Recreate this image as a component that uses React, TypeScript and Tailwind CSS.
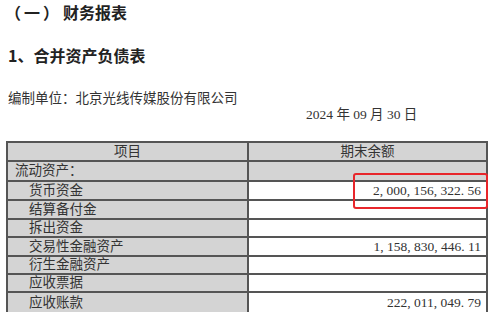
const rows: { label: string; indent: boolean; value: string; h: string; grayValue?: boolean }[] = [
  { label: "流动资产：", indent: false, value: "", h: "h-[20px]", grayValue: true },
  { label: "货币资金", indent: true, value: "2, 000, 156, 322. 56", h: "h-[19px]" },
  { label: "结算备付金", indent: true, value: "", h: "h-[19px]" },
  { label: "拆出资金", indent: true, value: "", h: "h-[18px]" },
  { label: "交易性金融资产", indent: true, value: "1, 158, 830, 446. 11", h: "h-[19px]" },
  { label: "衍生金融资产", indent: true, value: "", h: "h-[18px]" },
  { label: "应收票据", indent: true, value: "", h: "h-[18px]" },
  { label: "应收账款", indent: true, value: "222, 011, 049. 79", h: "h-[19px]" },
];

const serif = "font-['Liberation_Serif','Noto_Sans_CJK_SC',serif]";

export default function App() {
  return (
    <div className="w-[491px] h-[312px] bg-white overflow-hidden relative font-['Noto_Sans_CJK_SC',sans-serif] text-[#222]">
      {/* Headings */}
      <div className="h-[24px] pl-[5px] flex items-center text-[16px] font-bold leading-none">
        <span className="tracking-[3px]">（一）</span>
        <span className="ml-[1px]">财务报表</span>
      </div>
      <div className="h-[24px] mt-[19px] pl-[8px] flex items-center text-[16px] font-bold leading-none">
        1、合并资产负债表
      </div>
      <div className="h-[20px] mt-[21px] pl-[8px] flex items-center text-[13.5px] text-[#333] leading-none">
        编制单位：北京光线传媒股份有限公司
      </div>
      <div className={`h-[18px] mt-[-2px] pl-[306px] flex items-center text-[13.5px] text-[#333] leading-none ${serif}`}>
        2024 年 09 月 30 日
      </div>

      {/* Table */}
      <div className={`absolute left-[6px] top-[141px] w-[482px] border-2 border-[#555] text-[13.5px] text-[#333] leading-none ${serif}`}>
        <div className="flex h-[19px] border-b-2 border-[#555]">
          <div className="w-[241px] bg-[#d4d4d4] border-r-2 border-[#555] flex items-center justify-center">项目</div>
          <div className="flex-1 bg-[#d4d4d4] flex items-center justify-center">期末余额</div>
        </div>
        {rows.map((r, i) => (
          <div
            key={r.label}
            className={`flex ${r.h} ${i < rows.length - 1 ? "border-b-2 border-[#555]" : ""}`}
          >
            <div
              className={`w-[241px] bg-[#d4d4d4] border-r-2 border-[#555] flex items-center ${
                r.indent ? "pl-[21px]" : "pl-[7px]"
              }`}
            >
              {r.label}
            </div>
            <div
              className={`flex-1 flex items-center justify-end pr-[5px] ${
                r.grayValue ? "bg-[#d4d4d4]" : "bg-white"
              }`}
            >
              {r.value}
            </div>
          </div>
        ))}
      </div>

      {/* Highlight box */}
      <div className="absolute left-[353px] top-[173px] w-[135px] h-[36px] border-2 border-[#e8262b] rounded-[3px]" />
    </div>
  );
}
